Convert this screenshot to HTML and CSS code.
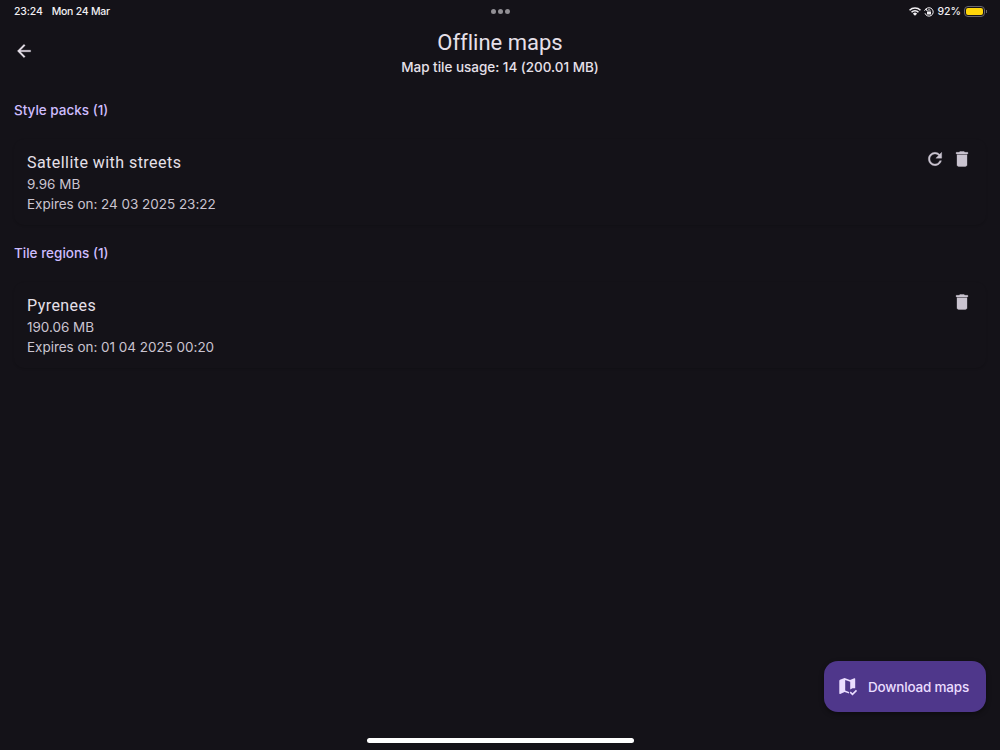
FILE: index.html
```html
<!DOCTYPE html>
<html lang="en">
<head>
  <meta charset="UTF-8">
  <title>Offline maps</title>
  <link rel="stylesheet" href="styles.css">
</head>
<body>
  <div class="status-bar">
    <div class="status-left">
      <span class="time">23:24</span>
      <span class="date">Mon 24 Mar</span>
    </div>
    <div class="multitask"><i></i><i></i><i></i></div>
    <div class="status-right">
      <svg class="wifi" viewBox="0 0 24 18">
        <path d="M1 6.5a15.5 15.5 0 0 1 22 0M5 10.6a10 10 0 0 1 14 0" fill="none" stroke="currentColor" stroke-width="3"/>
        <path d="M12 17.5l-4.2-4.2a6 6 0 0 1 8.4 0z" fill="currentColor"/>
      </svg>
      <svg class="lock" viewBox="0 0 20 20">
        <path d="M3.6 4.4A8.4 8.4 0 1 1 2 12.5M1 7.5l3-4 2 4.5" fill="none" stroke="currentColor" stroke-width="2"/>
        <rect x="6" y="9" width="8" height="6" rx="1" fill="currentColor"/>
        <path d="M7.7 9V7.5a2.3 2.3 0 0 1 4.6 0V9" fill="none" stroke="currentColor" stroke-width="1.5"/>
      </svg>
      <span class="percent">92%</span>
      <div class="battery"><div class="battery-level"></div></div>
    </div>
  </div>

  <header class="app-bar">
    <svg class="back" viewBox="0 0 24 24"><path d="M20 11H7.83l5.59-5.59L12 4l-8 8 8 8 1.41-1.41L7.83 13H20v-2z"/></svg>
    <div class="heading">
      <h1>Offline maps</h1>
      <p>Map tile usage: 14 (200.01 MB)</p>
    </div>
  </header>

  <main>
    <h2>Style packs (1)</h2>
    <div class="card">
      <div class="info">
        <h3>Satellite with streets</h3>
        <p>9.96 MB</p>
        <p>Expires on: 24 03 2025 23:22</p>
      </div>
      <div class="actions">
        <svg viewBox="0 0 24 24"><path d="M17.65 6.35C16.2 4.9 14.21 4 12 4c-4.42 0-7.99 3.58-7.99 8s3.57 8 7.99 8c3.73 0 6.84-2.55 7.73-6h-2.08c-.82 2.33-3.04 4-5.65 4-3.31 0-6-2.69-6-6s2.69-6 6-6c1.66 0 3.14.69 4.22 1.78L13 11h7V4l-2.35 2.35z"/></svg>
        <svg viewBox="0 0 24 24"><path d="M6 19c0 1.1.9 2 2 2h8c1.1 0 2-.9 2-2V7H6v12zM19 4h-3.5l-1-1h-5l-1 1H5v2h14V4z"/></svg>
      </div>
    </div>

    <h2>Tile regions (1)</h2>
    <div class="card">
      <div class="info">
        <h3>Pyrenees</h3>
        <p>190.06 MB</p>
        <p>Expires on: 01 04 2025 00:20</p>
      </div>
      <div class="actions">
        <svg viewBox="0 0 24 24"><path d="M6 19c0 1.1.9 2 2 2h8c1.1 0 2-.9 2-2V7H6v12zM19 4h-3.5l-1-1h-5l-1 1H5v2h14V4z"/></svg>
      </div>
    </div>
  </main>

  <button class="download">
    <svg viewBox="0 0 20 20">
      <path d="M1.3 3.7Q1.3 3 2 2.7L6.600 1 12 2.9 16.3 1.2Q17.2.9 17.2 1.8V11.2H14.500L12.2 12.6V4.7L7.2 3V13.6L11 14.9V16.500L6.600 15.1 2.2 16.9Q1.3 17.2 1.3 16.3Z"/>
      <path d="M12.2 15.1 14.5 17.4 18.5 13.4" class="check"/>
    </svg>
    <span>Download maps</span>
  </button>
  <div class="home-indicator"></div>
</body>
</html>
```

FILE: styles.css
```css
:root {
  --bg: #141218;
  --text: #e6e0e9;
  --text-dim: #cac4d0;
  --primary: #cfbdfe;
  --fab-bg: #4f378b;
  --fab-text: #eaddff;
}

* {
  box-sizing: border-box;
}

body {
  margin: 0;
  height: 750px;
  overflow: hidden;
  display: flex;
  flex-direction: column;
  background: var(--bg);
  color: var(--text);
  font-family: Inter, "Liberation Sans", sans-serif;
}

h1, h2, h3, p {
  margin: 0;
}

svg {
  display: block;
  fill: currentColor;
}

/* status bar */
.status-bar {
  height: 24px;
  padding: 0 13px 0 14px;
  display: grid;
  grid-template-columns: 1fr auto 1fr;
  font-size: 10.5px;
  font-weight: 500;
  line-height: 22px;
  color: #f2f0f4;
}

.status-left,
.status-right {
  height: 23px;
  display: flex;
  align-items: center;
}

.status-left {
  gap: 9px;
  padding-top: 1px;
}

.time {
  letter-spacing: -0.15px;
}

.date {
  letter-spacing: -0.25px;
}

.status-right {
  justify-content: flex-end;
}

.percent {
  padding-top: 1px;
}

.multitask {
  height: 23px;
  display: flex;
  align-items: center;
  gap: 2px;
}

.multitask i {
  width: 5px;
  height: 5px;
  border-radius: 50%;
  background: #918f94;
}

.wifi {
  width: 12px;
  height: 9px;
  margin-right: 3px;
}

.lock {
  width: 10px;
  height: 10px;
  margin-right: 3px;
}

.battery {
  position: relative;
  width: 21px;
  height: 11px;
  margin: 0 2px 0 3px;
  padding: 1px;
  border: 1px solid #69676c;
  border-radius: 4px;
}

.battery::after {
  content: "";
  position: absolute;
  right: -3px;
  top: 3px;
  width: 1px;
  height: 3px;
  background: #69676c;
}

.battery-level {
  height: 7px;
  border-radius: 2px;
  background: #ffd60a;
}

/* app bar */
.app-bar {
  height: 56px;
  padding: 0 15px;
  display: grid;
  grid-template-columns: 20px 1fr 20px;
}

.back {
  width: 20px;
  height: 20px;
  margin: 17px 0 0 -1px;
  stroke: currentColor;
  stroke-width: 0.3;
}

.heading {
  text-align: center;
}

h1 {
  margin-top: 5px;
  font-family: Roboto, "Liberation Sans", sans-serif;
  font-size: 22px;
  font-weight: 400;
  line-height: 28px;
  font-variant-ligatures: none;
}

.heading p {
  font-size: 13.5px;
  font-weight: 500;
  line-height: 20px;
  letter-spacing: -0.02px;
}

/* lists */
main {
  flex: 1;
  padding: 20px 14px 0;
}

h2 {
  height: 20px;
  margin-bottom: 19px;
  font-size: 13.5px;
  font-weight: 500;
  line-height: 20px;
  color: var(--primary);
}

.card {
  height: 86px;
  margin-bottom: 18px;
  padding: 11px 14px 11px 13px;
  display: flex;
  justify-content: space-between;
  border-radius: 10px;
  box-shadow: 0 1px 2px rgba(0, 0, 0, 0.15);
}

.info p {
  font-size: 13.5px;
  line-height: 20px;
  letter-spacing: -0.03px;
  color: var(--text-dim);
}

.info h3 {
  height: 24px;
  font-family: Roboto, "Liberation Sans", sans-serif;
  font-size: 16px;
  font-weight: 400;
  line-height: 26px;
  letter-spacing: 0.45px;
}

.actions {
  display: flex;
  gap: 7px;
  margin-top: -1px;
  color: var(--text-dim);
}

.actions svg {
  width: 20px;
  height: 20px;
  stroke: currentColor;
  stroke-width: 0.4;
}

/* floating button */
.download {
  position: absolute;
  right: 14px;
  bottom: 38px;
  width: 162px;
  height: 51px;
  padding: 1px 0 0 14px;
  display: flex;
  align-items: center;
  gap: 10px;
  border: none;
  border-radius: 14px;
  background: var(--fab-bg);
  color: var(--fab-text);
  font: 500 13.5px/20px Inter, "Liberation Sans", sans-serif;
  letter-spacing: -0.2px;
  white-space: nowrap;
  box-shadow: 0 2px 5px rgba(0, 0, 0, 0.4);
}

.download svg {
  width: 20px;
  height: 20px;
}

.check {
  fill: none;
  stroke: currentColor;
  stroke-width: 1.6;
}

.home-indicator {
  width: 267px;
  height: 5px;
  margin: 0 auto 7px;
  border-radius: 3px;
  background: #fff;
}
```
